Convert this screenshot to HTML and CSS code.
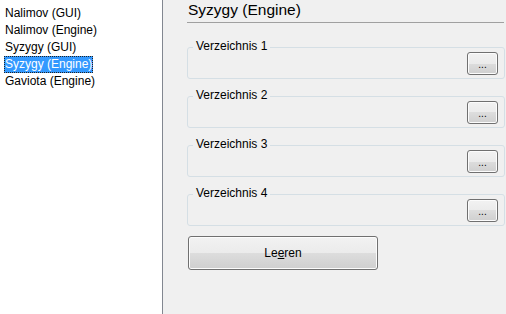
FILE: index.html
```html
<!DOCTYPE html>
<html lang="de">

<head>
    <meta charset="UTF-8">
    <title>Endspieldatenbanken</title>
    <link rel="stylesheet" href="styles.css">
</head>

<body>
    <div class="list">
        <ul>
            <li><span>Nalimov (GUI)</span></li>
            <li><span>Nalimov (Engine)</span></li>
            <li><span>Syzygy (GUI)</span></li>
            <li><span class="selected">Syzygy (Engine)</span></li>
            <li><span>Gaviota (Engine)</span></li>
        </ul>
    </div>

    <div class="page">
        <div class="title">Syzygy (Engine)</div>

        <div class="group">
            <span class="caption">Verzeichnis 1</span>
            <button class="browse">...</button>
        </div>
        <div class="group">
            <span class="caption">Verzeichnis 2</span>
            <button class="browse">...</button>
        </div>
        <div class="group">
            <span class="caption">Verzeichnis 3</span>
            <button class="browse">...</button>
        </div>
        <div class="group">
            <span class="caption">Verzeichnis 4</span>
            <button class="browse">...</button>
        </div>

        <button class="clear">Le<u>e</u>ren</button>
    </div>
</body>

</html>
```

FILE: styles.css
```css
body {
    margin: 0;
    height: 314px;
    display: flex;
    background-color: #f0f0f0;
    font-family: 'Liberation Sans', Arial, sans-serif;
    font-size: 12px;
    color: #000;
    overflow: hidden;
}

.list {
    width: 162px;
    background-color: #fff;
    border-right: 1px solid #828790;
}

.list ul {
    list-style: none;
    margin: 0;
    padding: 5px 0 0 4px;
}

.list li {
    height: 17px;
    line-height: 17px;
}

.list span {
    display: inline-block;
    padding: 0 1px;
}

.list .selected {
    background-color: #3399ff;
    color: #fff;
    outline: 1px dotted #222;
    outline-offset: -1px;
}

.page {
    flex: 1;
    padding: 0 1px 0 24px;
}

.title {
    height: 22px;
    line-height: 20px;
    font-size: 15.5px;
    padding-left: 1px;
    margin-right: 1px;
    border-bottom: 1px solid #a0a0a0;
    margin-bottom: 24px;
}

.group {
    position: relative;
    display: flex;
    justify-content: flex-end;
    border: 1px solid #d5dfe5;
    border-radius: 3px;
    padding: 4px 6px 3px;
    margin-bottom: 17px;
}

.caption {
    position: absolute;
    top: -9px;
    left: 5px;
    padding: 0 3px;
    line-height: 15px;
    background-color: #f0f0f0;
}

button {
    font-family: 'Liberation Sans', Arial, sans-serif;
    font-size: 12px;
    color: #000;
    border: 1px solid #707070;
    border-radius: 3px;
    background: linear-gradient(#f2f2f2 0%, #ebebeb 50%, #dddddd 50%, #cfcfcf 100%);
    box-shadow: inset 0 0 0 1px #fcfcfc;
    padding: 0;
}

.browse {
    width: 31px;
    height: 23px;
    font-size: 10px;
    line-height: 23px;
}

.clear {
    width: 190px;
    height: 34px;
    margin: -7px 0 0 1px;
}

.clear u {
    text-decoration-thickness: 1px;
}
```
